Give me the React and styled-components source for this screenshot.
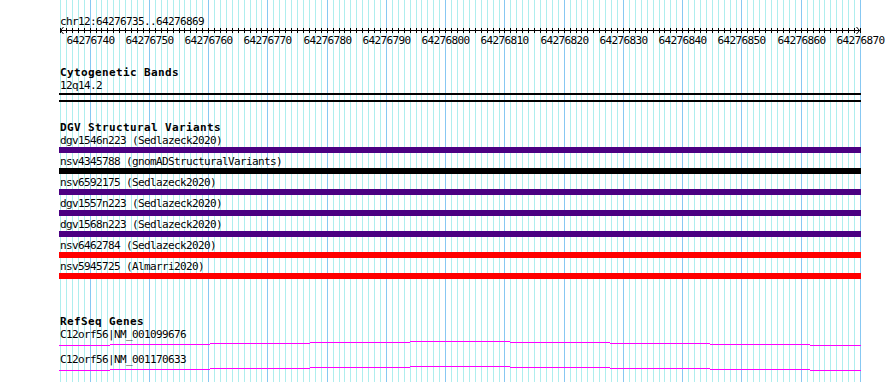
import React from "react";
import styled, { createGlobalStyle } from "styled-components";

const START = 64276735;
const END = 64276869;
const BP = END - START + 1;
const LEFT = 59;
const PX = 800 / BP;

// canvas x of the grid line before base i
const xAt = (i) => Math.round(60 + i * PX) - LEFT;

const PURPLE = "#4b0082";
const RED = "#ff0000";

const features = [
  { name: "dgv1546n223 (Sedlazeck2020)", color: PURPLE },
  { name: "nsv4345788 (gnomADStructuralVariants)", color: "#000000" },
  { name: "nsv6592175 (Sedlazeck2020)", color: PURPLE },
  { name: "dgv1557n223 (Sedlazeck2020)", color: PURPLE },
  { name: "dgv1568n223 (Sedlazeck2020)", color: PURPLE },
  { name: "nsv6462784 (Sedlazeck2020)", color: RED },
  { name: "nsv5945725 (Almarri2020)", color: RED },
];

const genes = ["C12orf56|NM_001099676", "C12orf56|NM_001170633"];
const geneSteps = [0, 51, 151, 251, 351, 451, 551, 651, 751, 802];
const geneRise = [4, 3, 2, 1, 0, 1, 2, 3, 4];

const GlobalStyle = createGlobalStyle`
  html, body {
    margin: 0;
    padding: 0;
    background: #ffffff;
  }
  body {
    font-family: "DejaVu Sans Mono", "Liberation Mono", monospace;
    color: #000000;
  }
`;

const Page = styled.div`
  width: 890px;
  height: 382px;
  overflow: hidden;
  padding-left: ${LEFT}px;
  box-sizing: border-box;
`;

const Canvas = styled.div`
  position: relative;
  width: 802px;
  height: 382px;
`;

const Grid = styled.svg`
  position: absolute;
  top: 0;
  left: 0;
  display: block;
`;

const Tracks = styled.div`
  position: relative;
  display: flex;
  flex-direction: column;
  padding-top: 16px;
`;

const Label = styled.div`
  padding-left: 1px;
  font-size: 11px;
  line-height: ${(p) => p.$lh || 13}px;
  letter-spacing: -0.62px;
  white-space: nowrap;
`;

const TrackTitle = styled.div`
  margin-top: ${(p) => p.$top}px;
  padding-left: 1px;
  font-size: 11px;
  font-weight: bold;
  line-height: 12px;
  letter-spacing: 0.38px;
  white-space: nowrap;
`;

const RulerSvg = styled.svg`
  display: block;
  overflow: visible;
`;

const Band = styled.div`
  height: 5px;
  border-top: 2px solid #000;
  border-bottom: 2px solid #000;
`;

const Feature = styled.div`
  display: flex;
  flex-direction: column;
  margin-bottom: 2px;
`;

const Bar = styled.div`
  height: 6px;
  background: ${(p) => p.$color};
`;

const GeneSvg = styled.svg`
  display: block;
`;

function GridLines() {
  const lines = [];
  for (let i = 0; i <= BP; i++) {
    const major = (START + i) % 10 === 0;
    lines.push(
      <rect key={i} x={xAt(i)} y={0} width={1} height={382}
        fill={major ? "#87c8f2" : "#aeeeee"} />
    );
  }
  return (
    <Grid width={802} height={382} shapeRendering="crispEdges">
      {lines}
    </Grid>
  );
}

function Ruler() {
  const ticks = [];
  const labels = [];
  for (let i = 0; i <= BP; i++) {
    ticks.push(<rect key={i} x={xAt(i)} y={0} width={1} height={5} fill="#000" />);
    if ((START + i) % 10 === 0) {
      labels.push(
        <text key={i} x={xAt(i) + 0.5} y={16} textAnchor="middle"
          fontSize="11" letterSpacing="-0.62">
          {START + i}
        </text>
      );
    }
  }
  return (
    <RulerSvg width={802} height={18}>
      <g shapeRendering="crispEdges">
        <rect x={1} y={2} width={800} height={1} fill="#000" />
        {ticks}
      </g>
      <polyline points="4.5,-1 1.5,2.5 4.5,6" fill="none" stroke="#000" strokeWidth="1" />
      <polyline points="797.5,-1 800.5,2.5 797.5,6" fill="none" stroke="#000" strokeWidth="1" />
      {labels}
    </RulerSvg>
  );
}

function GeneLine() {
  return (
    <GeneSvg width={802} height={12} shapeRendering="crispEdges">
      {geneRise.map((dy, k) => (
        <rect key={k} x={geneSteps[k]} y={dy}
          width={geneSteps[k + 1] - geneSteps[k]} height={1} fill="#ff00ff" />
      ))}
    </GeneSvg>
  );
}

export default function App() {
  return (
    <>
      <GlobalStyle />
      <Page>
        <Canvas>
          <GridLines />
          <Tracks>
            <Label $lh={12}>chr12:{START}..{END}</Label>
            <Ruler />

            <TrackTitle $top={21}>Cytogenetic Bands</TrackTitle>
            <Label $lh={14}>12q14.2</Label>
            <Band />

            <TrackTitle $top={20}>DGV Structural Variants</TrackTitle>
            {features.map((f) => (
              <Feature key={f.name}>
                <Label>{f.name}</Label>
                <Bar $color={f.color} />
              </Feature>
            ))}

            <TrackTitle $top={35}>RefSeq Genes</TrackTitle>
            {genes.map((g) => (
              <div key={g}>
                <Label>{g}</Label>
                <GeneLine />
              </div>
            ))}
          </Tracks>
        </Canvas>
      </Page>
    </>
  );
}
